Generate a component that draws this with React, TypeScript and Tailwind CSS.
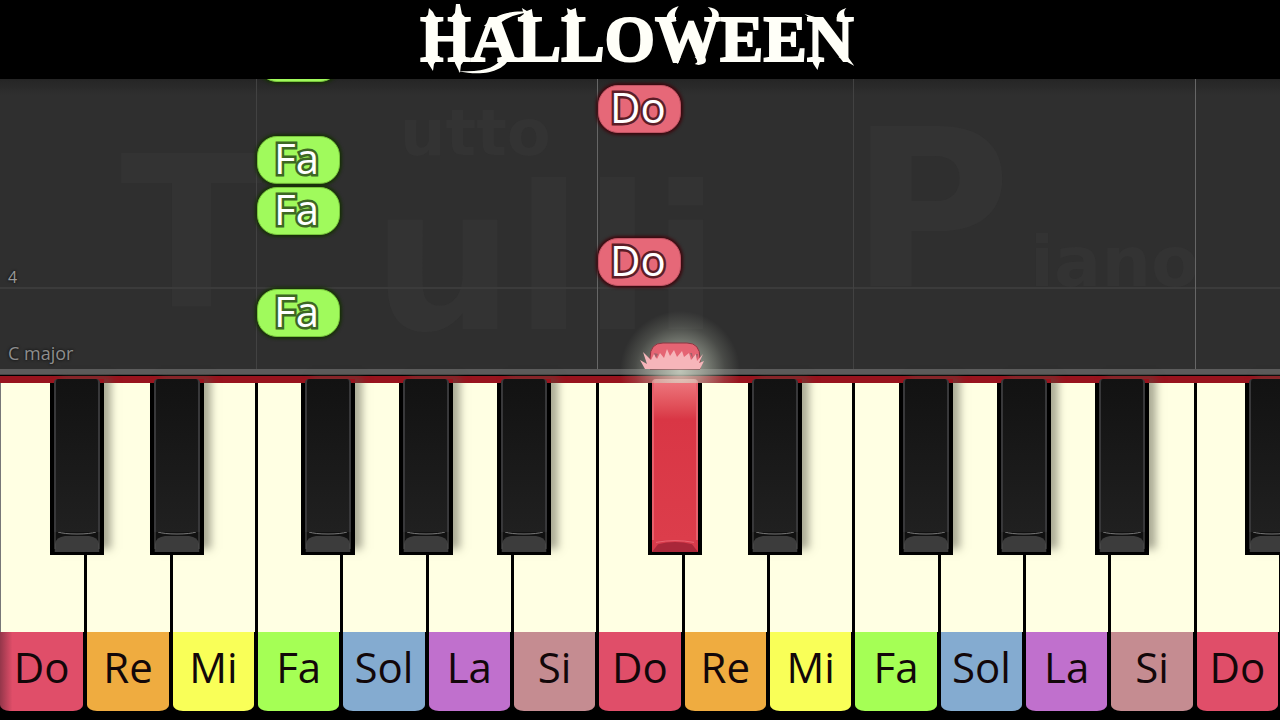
import { clsx } from 'clsx'

type NoteName = 'Do' | 'Re' | 'Mi' | 'Fa' | 'Sol' | 'La' | 'Si'

const SCALE: NoteName[] = ['Do', 'Re', 'Mi', 'Fa', 'Sol', 'La', 'Si']

const KEYS: NoteName[] = [...SCALE, ...SCALE, 'Do']

const LABEL_COLORS: Record<NoteName, string> = {
  Do: 'bg-[#e04e69]',
  Re: 'bg-[#efac40]',
  Mi: 'bg-[#f9ff58]',
  Fa: 'bg-[#a5ff55]',
  Sol: 'bg-[#84abd0]',
  La: 'bg-[#c070cd]',
  Si: 'bg-[#c58c91]',
}

// Where the sharp starts, measured across its white key
const SHARP_OFFSETS: Partial<Record<NoteName, string>> = {
  Do: 'left-[59%]',
  Re: 'left-[76%]',
  Fa: 'left-[53%]',
  Sol: 'left-[68%]',
  La: 'left-[83%]',
}

const PRESSED_SHARP = 7

interface FallingNote {
  lane: number
  bottom: number
  entering?: boolean
}

const NOTES: FallingNote[] = [
  // still sliding in from the top, so its label is not shown yet
  { lane: 3, bottom: 287, entering: true },
  { lane: 3, bottom: 185 },
  { lane: 3, bottom: 134 },
  { lane: 3, bottom: 32 },
  { lane: 7, bottom: 236 },
  { lane: 7, bottom: 83 },
]

function Title() {
  return (
    <header className="flex h-[79px] shrink-0 items-center justify-center bg-black pr-1.5">
      <div className="relative">
        <h1 className="font-['Liberation_Serif',serif] text-[65px] leading-[79px] font-bold text-[#fffff8] [-webkit-text-stroke:2px_#fffff8]">
          HALLOWEEN
        </h1>
        <svg viewBox="0 0 434 79" className="absolute inset-0 h-full w-full" fill="#fffff8" aria-hidden="true">
          {/* thorns on the stems */}
          <path d="M8 23L3 20L8 15L9 8L13 12L15 16L20 20L16 24z M34 23L30 19L35 13L36 4L40 4L42 14L47 19L43 24z" />
          <path d="M6 56h14l-3 4l-3 4l-1 7l-5-8z M34 56h12l-2 5l-3 4l-1 8l-5-10z" />
          <path d="M103 21l-3-4l4-3l-2-6l5 3l5-2l1 7l3 5z M147 21l-3-4l4-3l-1-6l4 2l5-2l1 7l3 6z" />
          {/* horns and claws around the W */}
          <path d="M247 21c-1-7 3-12 12-15c-4 6-5 10-2 15z M289 21c5-4 5-9-1-14c11 1 14 8 9 14z" />
          <path d="M252 55l9 2l-3 7l-4-4z M275 57l10-1c3 6 1 8-6 9l-4-1c4-2 4-4 0-7z" />
          <path d="M392 19l-7-5l14 4z M418 20c-2-6 2-10 9-12c-4 4-2 8 0 12z M392 58h11l-3 5l-2 7l-4-6z M423 56l4-1l8 11l-16-9z" />
          {/* swash under the A */}
          <path d="M38 71c26 6 48 0 52-15l-8 1c-4 10-19 16-44 14z" />
          <path d="M64 26C76 14 90 10 111 12C94 14 84 19 76 27z" />
        </svg>
      </div>
    </header>
  )
}

function Watermark() {
  return (
    <svg
      viewBox="0 0 1280 290"
      preserveAspectRatio="xMidYMax meet"
      className="absolute inset-0 h-full w-full"
      fill="#333333"
      fontFamily="'DejaVu Sans', sans-serif"
      fontWeight="700"
      aria-hidden="true"
    >
      <text x="120" y="228" fontSize="210">T</text>
      <text x="400" y="76" fontSize="64">utto</text>
      <text x="372" y="250" fontSize="200">ulli</text>
      <text x="850" y="208" fontSize="220">P</text>
      <text x="1030" y="207" fontSize="70">iano</text>
    </svg>
  )
}

function Note({ name, bottom, entering }: { name: NoteName; bottom: number; entering?: boolean }) {
  return (
    <div
      style={{ bottom }}
      className={clsx(
        'absolute left-0 z-10 flex h-12 w-[83px] items-center justify-center rounded-[20px] border text-[42px] leading-none font-medium text-white [paint-order:stroke_fill]',
        name === 'Fa'
          ? 'border-[#78c53c] bg-[#a0fa5c] shadow-[0_0_3px_2px_#183008] [-webkit-text-stroke:5px_#3d6724]'
          : 'border-[#c05564] bg-[#e66878] shadow-[0_0_3px_2px_#3d080e] [-webkit-text-stroke:5px_#5c1d27]'
      )}
    >
      {!entering && <span className="pr-1 pb-1">{name}</span>}
    </div>
  )
}

function Burst() {
  return (
    <div className="absolute bottom-0 left-[23px] z-30 h-[72px] w-[120px] overflow-hidden">
      <div className="absolute inset-x-0 top-0 h-[120px] bg-[radial-gradient(circle_closest-side,#dfe8d6c0_0%,#cdd6c490_35%,#b9c2b030_75%,#b9c2b000_100%)]" />
      <svg viewBox="0 0 120 72" className="absolute inset-0 h-full w-full" aria-hidden="true">
        <path d="M30 58V47Q30 32 43 32H67Q80 32 80 47V58z" fill="#e56473" stroke="#8c3541" />
        <path
          d="M25 58L20 49L27 53L23 41L31 49L34 43L37 48L40 42L44 47L47 38L50 45L54 39L57 46L62 40L64 46L69 42L71 49L76 43L77 50L83 43L79 52L84 50L80 58z"
          fill="#f6b5ba"
        />
        <path d="M34 42l4 1-2 4zM70 42l2 0 1 6zM76 43l2 0-1 5z" fill="#a0606a" />
      </svg>
    </div>
  )
}

function PianoRoll() {
  return (
    <main className="relative min-h-[290px] flex-1 overflow-hidden bg-[#2f2f2f]">
      <Watermark />
      <div className="absolute inset-x-0 top-0 h-4 bg-linear-to-b from-[#252525] to-transparent" />
      <div className="absolute inset-x-0 bottom-20 h-0.5 bg-[#3b3b3b]" />
      <div className="absolute bottom-[82px] left-2 text-base leading-5 text-[#999] [text-shadow:0_0_3px_#000]">4</div>
      <div className="absolute bottom-1 left-2 text-lg leading-6 text-[#8e8e8e] [text-shadow:0_0_3px_#000]">C major</div>
      <div className="absolute inset-0 grid grid-cols-15">
        {KEYS.map((name, lane) => (
          <div
            key={lane}
            className={clsx(
              'relative border-l',
              lane > 0 && name === 'Do' ? 'border-[#666]' : name === 'Fa' ? 'border-[#424242]' : 'border-transparent'
            )}
          >
            {NOTES.filter((note) => note.lane === lane).map((note) => (
              <Note key={note.bottom} name={name} bottom={note.bottom} entering={note.entering} />
            ))}
          </div>
        ))}
      </div>
    </main>
  )
}

function SharpKey({ name, pressed }: { name: NoteName; pressed: boolean }) {
  return (
    <button
      type="button"
      aria-label={`${name} sharp`}
      aria-pressed={pressed}
      className={clsx(
        'absolute -top-1 z-20 flex h-44 w-[54px] flex-col bg-linear-to-b from-transparent from-[4px] to-black to-[4px] px-1 pb-[3px]',
        !pressed && 'shadow-[9px_-4px_8px_-2px_#55554880]',
        SHARP_OFFSETS[name]
      )}
    >
      <span
        className={clsx(
          'block w-full flex-1 rounded-t-sm border-x-2 bg-linear-to-b',
          pressed ? 'border-[#e8606c] from-[#ee7880] via-[#d93645] via-25% to-[#dc3d4b]' : 'border-[#38383a] from-[#121212] to-[#202020]'
        )}
      />
      <svg viewBox="0 0 46 20" className={clsx('block w-full', pressed ? 'h-3' : 'h-5')} preserveAspectRatio="none" aria-hidden="true">
        {pressed ? (
          <>
            <path d="M0 0H46V20H0z" fill="#d83b4b" />
            <path d="M0 20L6 7Q23 0 40 7L46 20z" fill="#a92739" />
            <path d="M4 4Q23 -2 42 4" stroke="#ed6f7b" fill="none" />
          </>
        ) : (
          <>
            <path d="M0 0H46V20H0z" fill="#111" />
            <path d="M1 20V12Q2 5 11 4H35Q44 5 45 12V20z" fill="#3c3c3c" />
            <path d="M4 0Q10 2 23 2T42 0" stroke="#777" fill="none" />
            <path d="M1 0V17M45 0V17" stroke="#505050" />
          </>
        )}
      </svg>
    </button>
  )
}

function Keyboard() {
  return (
    <section aria-label="Keyboard" className="relative shrink-0 bg-black">
      <div className="relative h-[14px]">
        <div className="h-1.5 border-b border-[#444] bg-[#5c5c5c]" />
        <div className="mt-px h-[7px] bg-[#98141e]" />
      </div>
      <div className="grid grid-cols-15">
        {KEYS.map((name, index) => (
          <div key={index} className="relative">
            <button type="button" className="flex w-full flex-col">
              <span
                className={clsx(
                  'block h-[249px] w-full border-r border-black bg-[#ffffe3]',
                  index > 0 ? 'border-l-2' : 'border-l border-l-[#777]'
                )}
              />
              <span className={clsx('block w-full pr-0.5', index > 0 && 'pl-0.5')}>
                <span
                  className={clsx(
                    'block h-[79px] w-full rounded-b-[10px_6px] pt-3 text-[42px] leading-[46px] font-medium text-[#120709]',
                    LABEL_COLORS[name],
                    index === 0 && 'bg-linear-to-r from-[#94364a] to-transparent to-15%'
                  )}
                >
                  {name}
                </span>
              </span>
            </button>
            {SHARP_OFFSETS[name] && <SharpKey name={name} pressed={index === PRESSED_SHARP} />}
            {index === PRESSED_SHARP && (
              <div className="absolute -top-[14px] left-0">
                <div className="relative h-3.5">
                  <Burst />
                </div>
              </div>
            )}
          </div>
        ))}
      </div>
      <div className="h-[9px]" />
    </section>
  )
}

export default function App() {
  return (
    <div className="flex min-h-screen flex-col overflow-hidden bg-black font-['Open_Sans',sans-serif]">
      <Title />
      <PianoRoll />
      <Keyboard />
    </div>
  )
}
